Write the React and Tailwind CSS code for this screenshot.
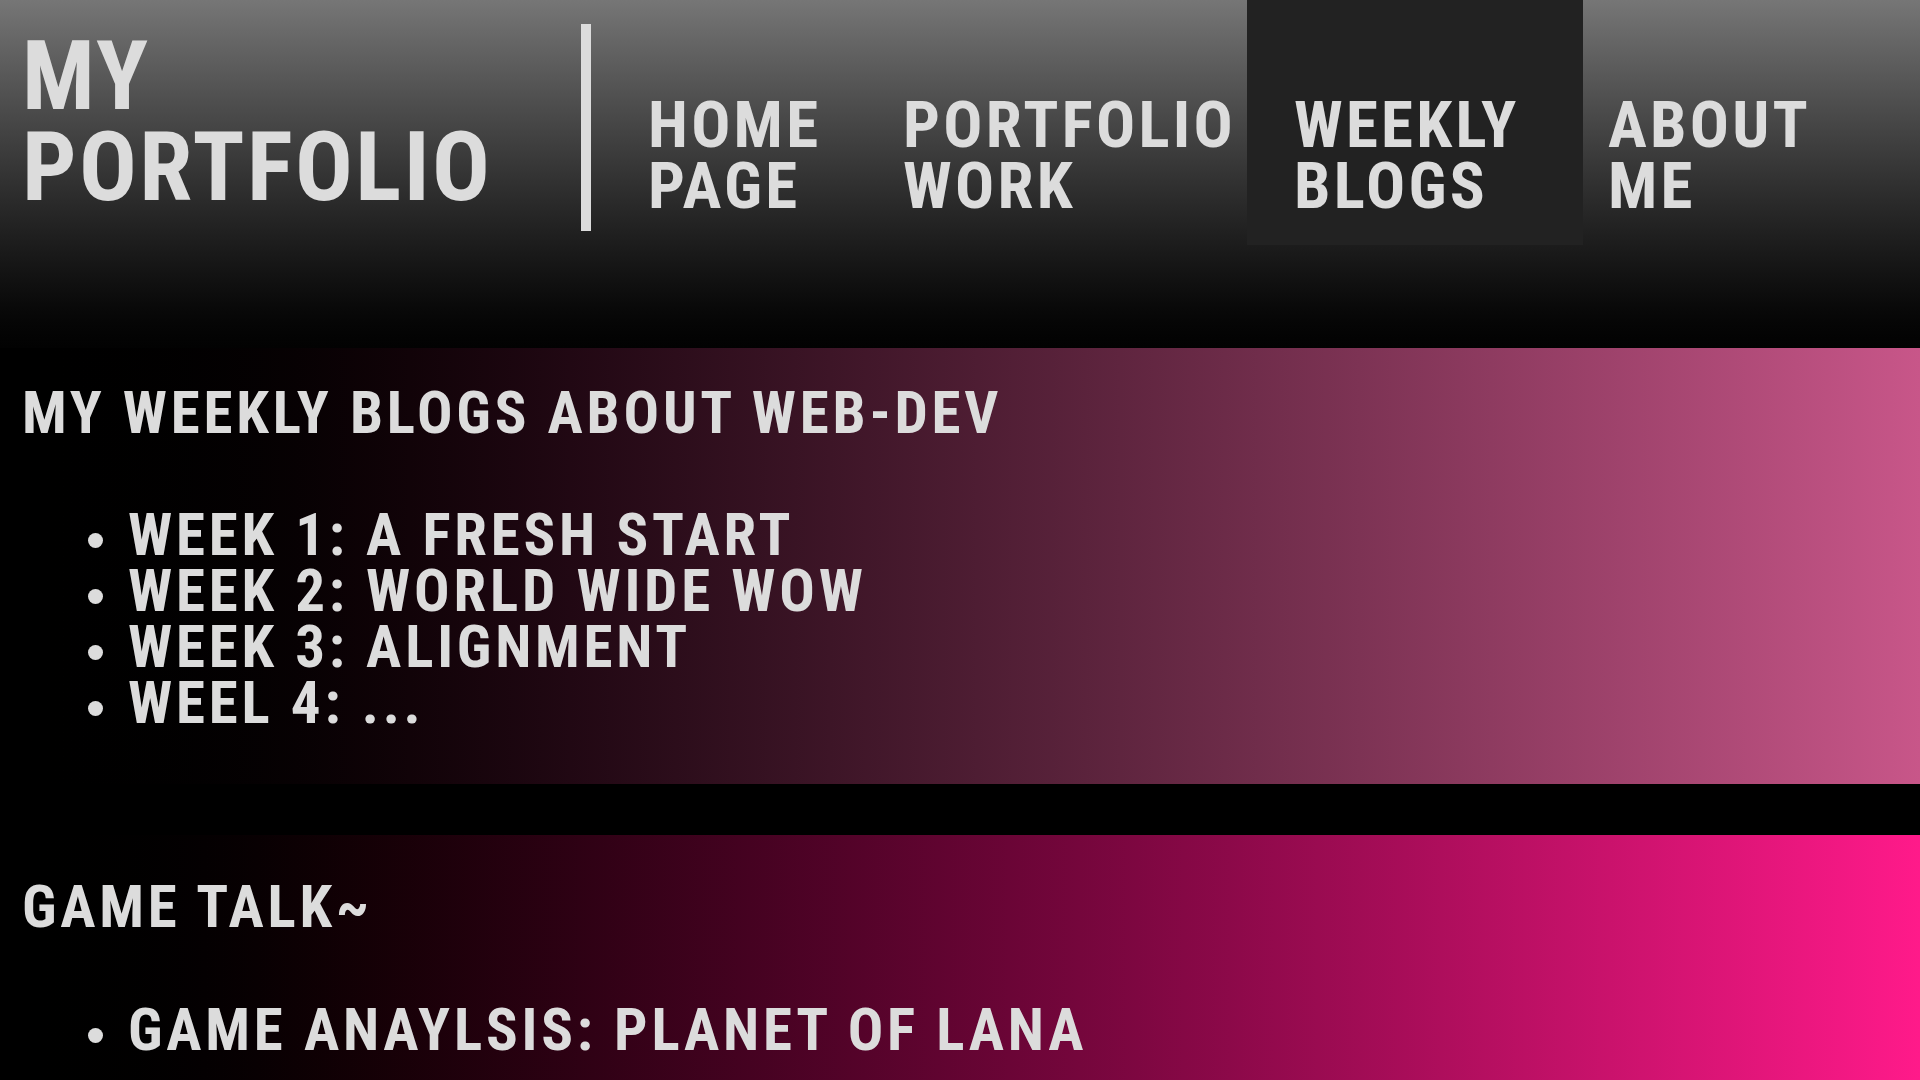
import React from 'react'

const navLinks = [
  { top: 'HOME', bottom: 'PAGE', box: 'ml-[10px] w-[255px] pl-[47px]' },
  { top: 'PORTFOLIO', bottom: 'WORK', box: 'w-[391px] pl-[47px]' },
  { top: 'WEEKLY', bottom: 'BLOGS', box: 'w-[336px] pl-[47px] bg-[#222222]', active: true },
  { top: 'ABOUT', bottom: 'ME', box: 'pl-[25px]' },
]

const weeklyPosts = ['WEEK 1: A FRESH START', 'WEEK 2: WORLD WIDE WOW', 'WEEK 3: ALIGNMENT', 'WEEL 4: ...']

const gamePosts = ['GAME ANAYLSIS: PLANET OF LANA']

function PostList({ items }) {
  return (
    <ul className="pl-[88px]">
      {items.map((item) => (
        <li key={item} className="flex items-start gap-[25px]">
          <span className="mt-[26px] h-[15px] w-[15px] shrink-0 rounded-full bg-[#dcdcdc]" />
          <a href="#" className="leading-[56px]">{item}</a>
        </li>
      ))}
    </ul>
  )
}

function Header() {
  return (
    <header className="flex h-[348px] items-start bg-linear-to-b from-[#767676] to-[#020202]">
      <div className="w-[581px] shrink-0 pl-[22px] pt-[31px]">
        <h1 className="text-[96px] leading-[91px] tracking-[0.025em]">
          MY
          <br />
          PORTFOLIO
        </h1>
      </div>
      <span className="mt-[24px] h-[207px] w-[10px] shrink-0 bg-[#dcdcdc]" />
      <nav className="flex items-start">
        {navLinks.map((link) => (
          <a key={link.top} href="#" className={`block h-[245px] shrink-0 pt-[95px] text-[65px] leading-[61px] tracking-[0.05em] ${link.box}`}>
            {link.top}
            <br />
            {link.bottom}
          </a>
        ))}
      </nav>
    </header>
  )
}

export default function App() {
  return (
    <div className="min-h-screen bg-black font-['Roboto_Condensed','Roboto',sans-serif] font-bold text-[#dcdcdc]">
      <Header />
      <main>
        <section className="bg-linear-to-r from-black to-[#c85689] px-[22px] pt-[37px] pb-[53px] text-[59px] tracking-[0.064em]">
          <h2 className="leading-[56px]">MY WEEKLY BLOGS ABOUT WEB-DEV</h2>
          <div className="mt-[66px] -mx-[22px]">
            <PostList items={weeklyPosts} />
          </div>
        </section>
        <section className="mt-[51px] bg-linear-to-r from-black to-[#ff1a8a] px-[22px] pt-[44px] pb-[53px] text-[59px] tracking-[0.064em]">
          <h2 className="leading-[56px]">GAME TALK~</h2>
          <div className="mt-[67px] -mx-[22px]">
            <PostList items={gamePosts} />
          </div>
        </section>
      </main>
    </div>
  )
}
